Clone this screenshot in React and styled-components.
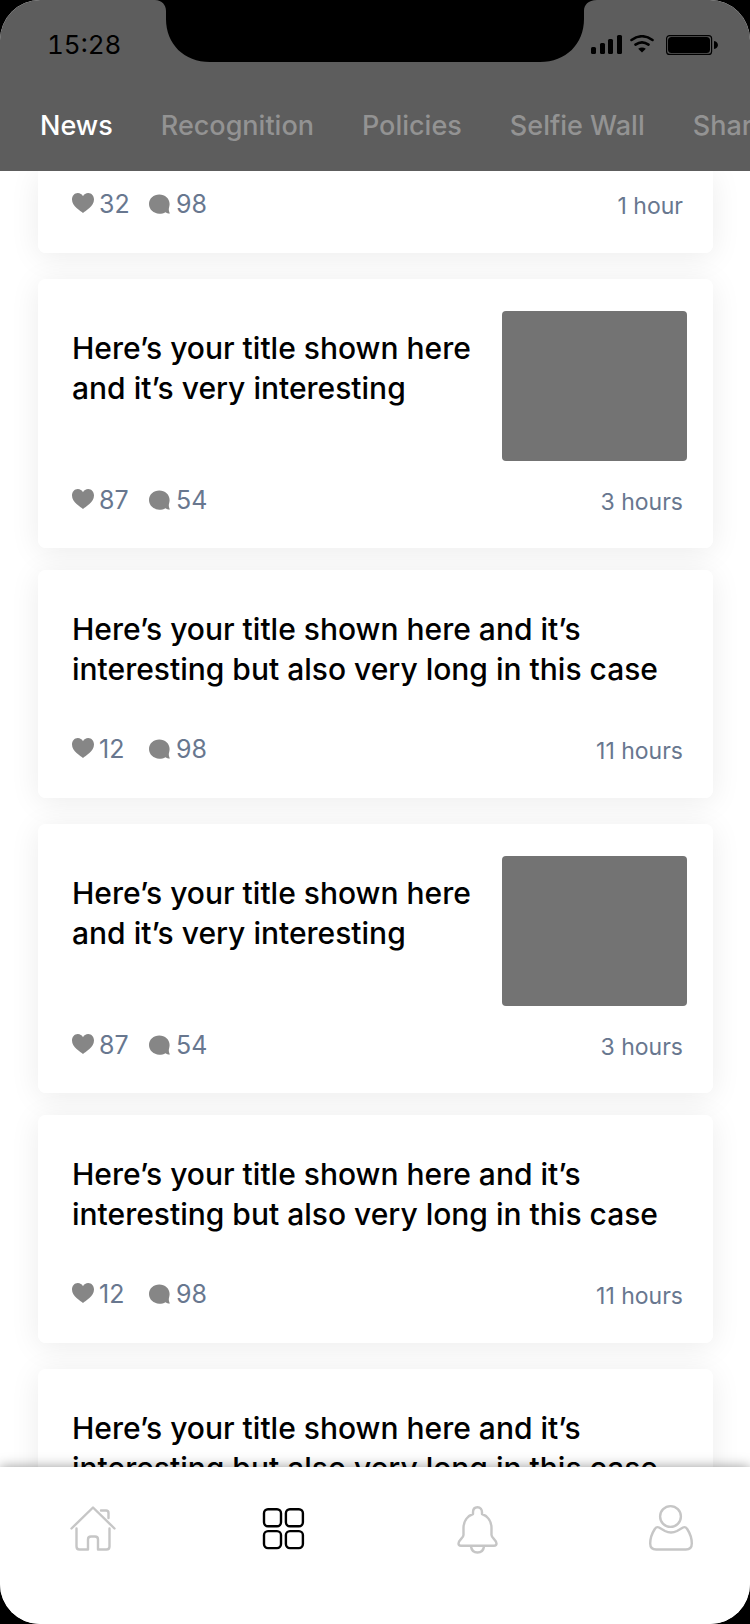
import React, { useState } from "react";
import styled, { createGlobalStyle } from "styled-components";

const GlobalStyle = createGlobalStyle`
  * { box-sizing: border-box; }
  body {
    margin: 0;
    background: #000;
    font-family: Inter, "Liberation Sans", sans-serif;
    color: #000;
  }
  button {
    font: inherit;
    color: inherit;
    background: none;
    border: 0;
    padding: 0;
    cursor: pointer;
  }
`;

const Screen = styled.div`
  height: 100vh;
  display: flex;
  flex-direction: column;
  overflow: hidden;
  border-radius: 40px;
  background: #fff;
`;

const Header = styled.header`
  flex: none;
  position: relative;
  background: #5d5d5d;
`;

const StatusBar = styled.div`
  display: flex;
  justify-content: space-between;
  height: 106px;
  padding-left: 47px;
  padding-right: 32px;
`;

const Clock = styled.time`
  padding-top: 29px;
  font-size: 26px;
  line-height: 32px;
  font-variant-numeric: tabular-nums;
`;

const Notch = styled.svg`
  position: absolute;
  top: 0;
  left: calc(50% - 220px);
  width: 442px;
  height: 62px;
`;

const StatusIcons = styled.svg`
  flex: none;
  width: 127px;
  height: 20px;
  margin-top: 35px;
`;

const Tabs = styled.nav`
  display: flex;
  gap: 48px;
  height: 65px;
  padding-left: 40px;
  overflow: hidden;
`;

const Tab = styled.button`
  flex: none;
  height: 40px;
  font-size: 27px;
  line-height: 40px;
  font-weight: 500;
  white-space: nowrap;
  color: ${(p) => (p.$active ? "#fff" : "#939393")};
`;

const Feed = styled.main`
  flex: 1;
  min-height: 0;
  overflow: hidden;
  isolation: isolate;
  padding: 0 37px 0 38px;
`;

const Card = styled.article`
  position: relative;
  margin-bottom: ${(p) => (p.$media ? 22 : 26)}px;
  padding-top: ${(p) => (p.$media ? 32 : p.$continued ? 18 : 39)}px;
  padding-right: 26px;
  padding-bottom: ${(p) => (p.$media ? 29 : 30)}px;
  padding-left: 34px;
  border-radius: ${(p) => (p.$continued ? "0 0 8px 8px" : "8px")};
  background: #fff;

  &::before {
    content: "";
    position: absolute;
    inset: 0;
    z-index: -1;
    border-radius: inherit;
    box-shadow: 0 4px 30px rgba(0, 0, 0, 0.08);
  }
`;

const CardBody = styled.div`
  display: flex;
  justify-content: space-between;
  margin-bottom: ${(p) => (p.$media ? 24 : 45)}px;
`;

const Title = styled.h2`
  flex: 1;
  margin: 0;
  padding-top: ${(p) => (p.$media ? 17 : 0)}px;
  font-size: 30px;
  line-height: 40px;
  font-weight: 500;
`;

const Picture = styled.div`
  flex: none;
  width: 185px;
  height: 150px;
  border-radius: 4px;
  background: #737373;
`;

const CardFooter = styled.footer`
  display: flex;
  align-items: flex-start;
  padding-right: 4px;
  font-size: 25px;
  line-height: 30px;
  color: #68778f;
`;

const Stat = styled.button`
  display: flex;
  align-items: center;
  gap: 5px;
  min-width: 77px;
  height: 30px;

  svg {
    flex: none;
    width: 22px;
    height: 22px;
    margin-bottom: 2px;
  }
`;

const Age = styled.span`
  margin-left: auto;
  font-size: 23px;
  line-height: 34px;
`;

const BottomBar = styled.nav`
  flex: none;
  position: relative;
  display: flex;
  justify-content: space-between;
  height: 157px;
  padding: 37px 55px 0 69px;
  background: #fff;
  box-shadow: 0 0 12px rgba(0, 0, 0, 0.4);
`;

const BottomButton = styled.button`
  width: 48px;
  height: 52px;
  color: ${(p) => (p.$active ? "#000" : "#c6c6c6")};

  svg {
    display: block;
    width: 48px;
    height: 52px;
    fill: none;
    stroke: currentColor;
    stroke-width: 2.4;
    stroke-linecap: round;
    stroke-linejoin: round;
  }
`;

const HeartIcon = () => (
  <svg viewBox="0 0 22 22" aria-hidden="true">
    <path
      d="M11 21C8.600 18.900 0 14.400 0 7.600 0 4 2.500 1.100 5.800 1.100c2.300 0 4.200 1.300 5.200 3.100 1-1.800 2.900-3.100 5.200-3.100 3.300 0 5.800 2.900 5.800 6.500 0 6.800-8.600 11.300-11 13.400z"
      fill="#868686"
    />
  </svg>
);

const CommentIcon = () => (
  <svg viewBox="0 0 22 22" aria-hidden="true">
    <path
      d="M10.300 2.600C16 2.600 20.600 6.600 20.600 12.100c0 2.300-.8 3.900-.8 5.200 0 1.500.3 2.500 1.100 4.200-1.800 0-3.300-.4-4.500-1.300-1.700 1-3.800 1.500-6.100 1.500C4.600 21.700 0 17.600 0 12.100 0 6.600 4.600 2.600 10.300 2.600z"
      fill="#868686"
    />
  </svg>
);

const tabs = ["News", "Recognition", "Policies", "Selfie Wall", "Shared"];

const shortTitle = "Here’s your title shown here and it’s very interesting";
const longTitle =
  "Here’s your title shown here and it’s interesting but also very long in this case";

const posts = [
  { likes: 32, comments: 98, age: "1 hour", continued: true },
  { title: shortTitle, media: true, likes: 87, comments: 54, age: "3 hours" },
  { title: longTitle, likes: 12, comments: 98, age: "11 hours" },
  { title: shortTitle, media: true, likes: 87, comments: 54, age: "3 hours" },
  { title: longTitle, likes: 12, comments: 98, age: "11 hours" },
  { title: longTitle },
];

const destinations = [
  {
    label: "Home",
    icon: (
      <>
        <path d="M2.500 24.500L24 3.500 45.500 24.500" />
        <path d="M32 6.500h5q2.500 0 2.500 2.500v5" />
        <path d="M7.500 24.500V42.500q0 3 3 3h8.500V35.500q0-3 3-3h4q3 0 3 3v10h8.500q3 0 3-3V24.500" />
      </>
    ),
  },
  {
    label: "Sections",
    icon: (
      <>
        <rect x="2" y="5.200" width="17" height="17" rx="4" />
        <rect x="23.900" y="5.200" width="17" height="17" rx="4" />
        <rect x="2" y="27.100" width="17" height="17" rx="4" />
        <rect x="23.900" y="27.100" width="17" height="17" rx="4" />
      </>
    ),
  },
  {
    label: "Notifications",
    icon: (
      <>
        <path d="M23.500 3.200c-3 0-4.500 2.300-4.500 5v1.800C13 12 9.500 17.500 9.500 24v7c0 3-5 5-5 8.500 0 1.500 1 2.200 2.500 2.200h33c1.500 0 2.500-.7 2.500-2.200 0-3.500-5-5.500-5-8.500v-7c0-6.500-3.500-12-9.500-14V8.200c0-2.700-1.500-5-4.500-5z" />
        <path d="M17 42.500c.5 3.500 3 6 6.500 6s6-2.500 6.500-6" />
      </>
    ),
  },
  {
    label: "Profile",
    icon: (
      <>
        <circle cx="23.500" cy="12.500" r="10.400" />
        <path d="M12 23.500c-1.500-.8-3-.2-4.200 1.500C5.200 29 3.200 35 3.200 39.500c0 4 2 6 6 6h29.600c4 0 6-2 6-6 0-4.500-2-10.500-4.600-14.500-1.200-1.700-2.700-2.300-4.200-1.500l-6 3.500c-4 2-8 2-12 0z" />
      </>
    ),
  },
];

function PhoneStatus() {
  return (
    <StatusBar>
      <Clock>15:28</Clock>
      <Notch viewBox="0 0 442 62" aria-hidden="true">
        <path d="M0 0C7 0 11 5 11 11v8C11 44 29 62 55 62H385C411 62 429 44 429 19V11C429 5 433 0 442 0z" />
      </Notch>
      <StatusIcons viewBox="0 0 127 20" role="img" aria-label="Signal, Wi-Fi, battery">
        <rect x="0" y="12" width="5" height="7" rx="1.500" />
        <rect x="9" y="8" width="5" height="11" rx="1.500" />
        <rect x="17" y="4" width="5" height="15" rx="1.500" />
        <rect x="26" y="0" width="5" height="19" rx="1.500" />
        <path
          d="M40.500 5q10.500-7.500 21 0M44.500 9.600q6.500-4.500 13 0"
          fill="none"
          stroke="#000"
          strokeWidth="2.600"
          strokeLinecap="round"
        />
        <path d="M47.200 13.800q3.800-2.600 7.600 0L51 17.600z" />
        <rect x="75.600" y="0.600" width="45" height="18.800" rx="3" fill="none" stroke="#000" strokeWidth="1.200" />
        <rect x="77" y="2" width="42" height="16" rx="3.500" />
        <path d="M123 6c5.300 1 5.300 7 0 8z" />
      </StatusIcons>
    </StatusBar>
  );
}

function Post({ post }) {
  return (
    <Card $media={post.media} $continued={post.continued}>
      {post.title && (
        <CardBody $media={post.media}>
          <Title $media={post.media}>{post.title}</Title>
          {post.media && <Picture role="img" aria-label="Article picture" />}
        </CardBody>
      )}
      {post.age && (
        <CardFooter>
          <Stat aria-label={`${post.likes} likes`}>
            <HeartIcon />
            {post.likes}
          </Stat>
          <Stat aria-label={`${post.comments} comments`}>
            <CommentIcon />
            {post.comments}
          </Stat>
          <Age>{post.age}</Age>
        </CardFooter>
      )}
    </Card>
  );
}

export default function App() {
  const [tab, setTab] = useState("News");
  const [place, setPlace] = useState("Sections");

  return (
    <>
      <GlobalStyle />
      <Screen>
        <Header>
          <PhoneStatus />
          <Tabs aria-label="Categories">
            {tabs.map((name) => (
              <Tab key={name} $active={name === tab} onClick={() => setTab(name)}>
                {name}
              </Tab>
            ))}
          </Tabs>
        </Header>
        <Feed>
          {posts.map((post, i) => (
            <Post key={i} post={post} />
          ))}
        </Feed>
        <BottomBar aria-label="Main">
          {destinations.map(({ label, icon }) => (
            <BottomButton
              key={label}
              aria-label={label}
              $active={label === place}
              onClick={() => setPlace(label)}
            >
              <svg viewBox="0 0 48 52" aria-hidden="true">{icon}</svg>
            </BottomButton>
          ))}
        </BottomBar>
      </Screen>
    </>
  );
}
